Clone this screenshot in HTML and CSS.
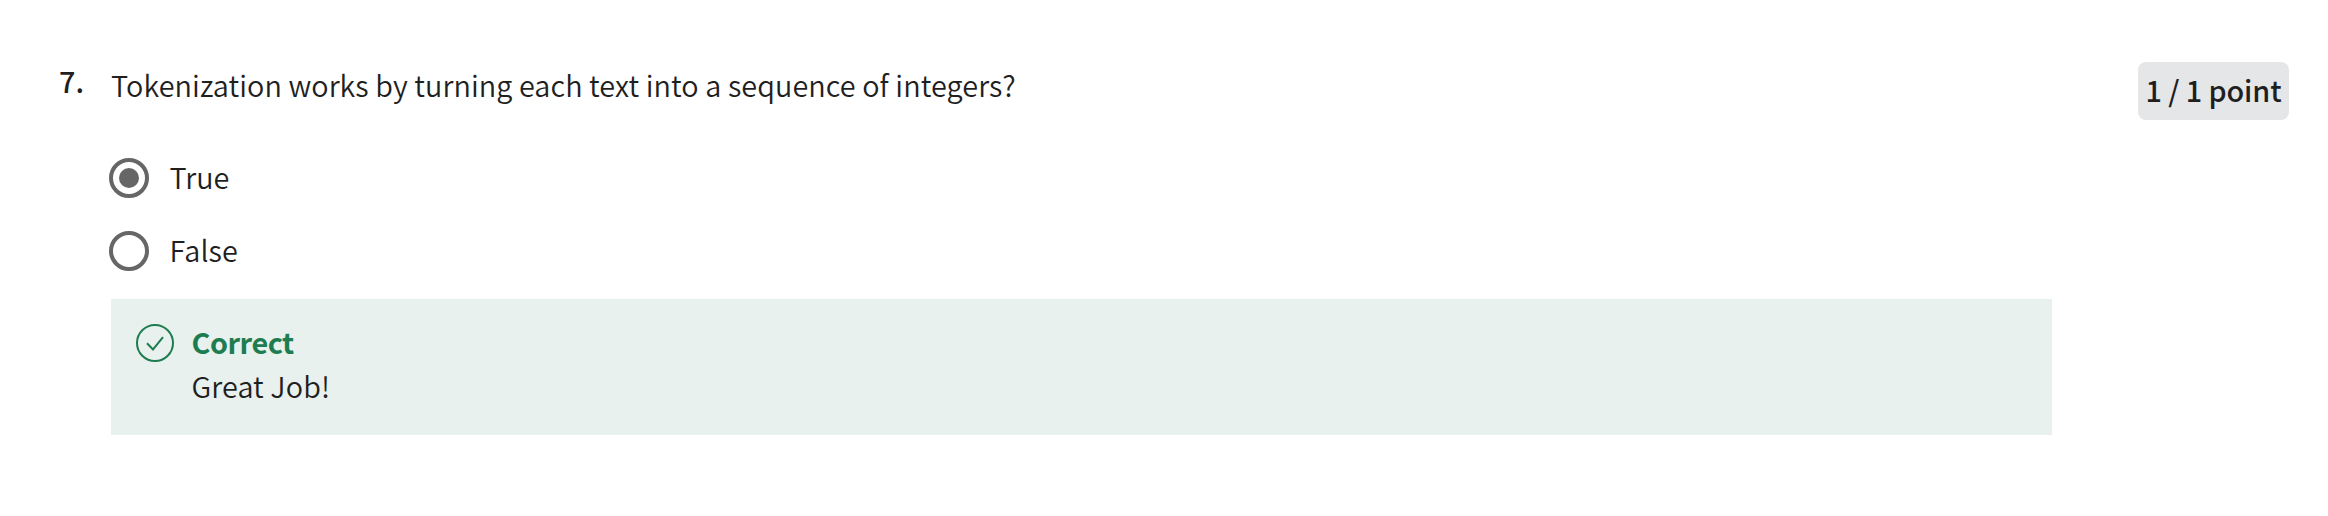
FILE: index.html
```html
<!DOCTYPE html>
<html lang="en">
<head>
<meta charset="utf-8">
<title>Quiz question</title>
<link rel="stylesheet" href="styles.css">
</head>
<body>
<main class="question">
  <div class="number">7.</div>
  <section class="content">
    <p class="prompt">Tokenization works by turning each text into a sequence of integers?</p>
    <div class="options">
      <div class="option">
        <svg class="radio" viewBox="0 0 40 40"><circle cx="20" cy="20" r="18" fill="none" stroke="#666" stroke-width="4"/><circle cx="20" cy="20" r="10" fill="#666"/></svg>
        <span class="option-text">True</span>
      </div>
      <div class="option">
        <svg class="radio" viewBox="0 0 40 40"><circle cx="20" cy="20" r="18" fill="none" stroke="#666" stroke-width="4"/></svg>
        <span class="option-text">False</span>
      </div>
    </div>
    <div class="feedback">
      <svg class="check" viewBox="0 0 38 38" fill="none" stroke="#1d7c50" stroke-width="2"><circle cx="19" cy="19" r="18"/><path d="M11 19.2 17 25.4 27 13.2"/></svg>
      <div class="feedback-body">
        <p class="verdict">Correct</p>
        <p class="message">Great Job!</p>
      </div>
    </div>
  </section>
  <div class="points">1 / 1 point</div>
</main>
</body>
</html>
```
FILE: styles.css
```css
* { box-sizing: border-box; }
body {
  margin: 0;
  background: #fff;
  color: #1f1f1f;
  font-family: "Noto Sans CJK SC", "Noto Sans", sans-serif;
  font-size: 28.8px;
  font-weight: 350;
  letter-spacing: 0.085px;
  line-height: 44px;
  white-space: nowrap;
}
p { margin: 0; }
.question { display: flex; align-items: flex-start; height: 516px; padding-top: 62px; }
.number { width: 111px; padding-left: 59px; margin-top: -3px; font-weight: 500; }
.content { width: 1941px; }
.prompt { padding-top: 1px; }
.options { display: flex; flex-direction: column; gap: 33px; margin: 51px 0 28px; }
.option { display: flex; align-items: center; height: 40px; margin-left: -2px; }
.option-text { padding-bottom: 2px; }
.radio { flex: none; width: 40px; height: 40px; margin-right: 20.5px; }
.feedback { display: flex; height: 136px; padding: 21px 24px; background: #e8f1ee; }
.check { flex: none; width: 38px; height: 38px; margin: 4px 17.5px 0 1px; }
.verdict { color: #1d7c50; font-weight: 700; letter-spacing: -0.45px; }
.points {
  display: flex;
  align-items: center;
  justify-content: center;
  width: 151px;
  height: 58px;
  margin-left: 86px;
  padding-bottom: 2px;
  border-radius: 8px;
  background: #e5e6e8;
  font-weight: 500;
  letter-spacing: -0.1px;
}
```
